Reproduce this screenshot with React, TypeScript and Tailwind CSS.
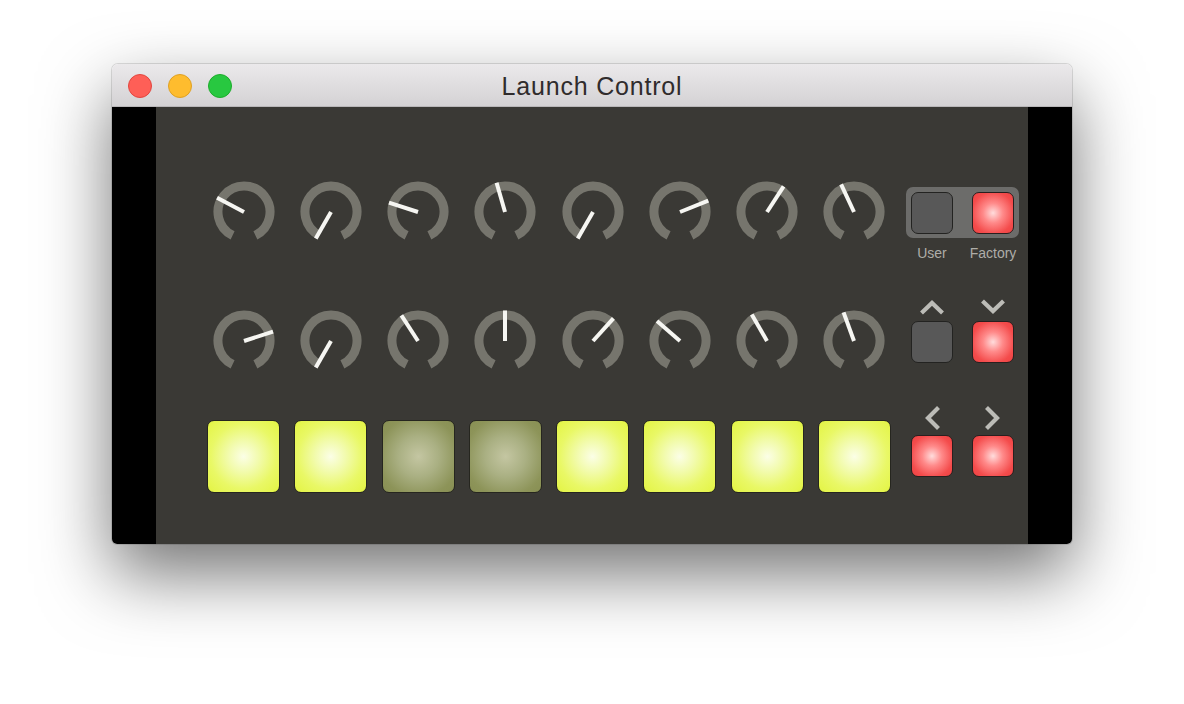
import React from "react";

const R1 = [-62, -150, -72, -16, -150, 68, 33, -25];
const R2 = [72, -150, -33, 0, 42, -49, -30, -20];
const PADS = [true, true, false, false, true, true, true, true];

function Knob({ angle }: { angle: number }) {
  const c = 31;
  const r = 26;
  const rad = (a: number) => (a * Math.PI) / 180;
  const pt = (a: number, rr: number) => [c + rr * Math.sin(rad(a)), c - rr * Math.cos(rad(a))];
  const [sx, sy] = pt(-154, r);
  const [ex, ey] = pt(154, r);
  const [px, py] = pt(angle, 30.5);
  return (
    <svg width="62" height="62" viewBox="0 0 62 62">
      <path
        d={`M ${sx} ${sy} A ${r} ${r} 0 1 1 ${ex} ${ey}`}
        fill="none"
        stroke="#76756d"
        strokeWidth="9"
      />
      <line x1={c} y1={c} x2={px} y2={py} stroke="#f6f6f2" strokeWidth="4" />
    </svg>
  );
}

function RedBtn() {
  return (
    <div className="w-[42px] h-[42px] rounded-[7px] border border-[#2a1f1f] bg-[radial-gradient(circle_at_center,#ffdcdc_0%,#ff8a8a_35%,#f44c4c_75%,#ee4242_100%)]" />
  );
}

function GrayBtn() {
  return <div className="w-[42px] h-[42px] rounded-[7px] border border-[#232321] bg-[#585858]" />;
}

function Pad({ on }: { on: boolean }) {
  return on ? (
    <div className="w-[73px] h-[73px] rounded-[7px] border border-[#26261f] bg-[radial-gradient(circle_at_center,#fbfee6_0%,#f2fbae_30%,#e9f866_65%,#e3f443_100%)]" />
  ) : (
    <div className="w-[73px] h-[73px] rounded-[7px] border border-[#26261f] bg-[radial-gradient(circle_at_center,#c4c6a2_0%,#aab083_40%,#8d9459_80%,#888f53_100%)]" />
  );
}

function Chevron({ dir }: { dir: "up" | "down" | "left" | "right" }) {
  const stroke = "#bcbcb7";
  const sw = "4.2";
  if (dir === "up")
    return (
      <svg width="24" height="16" viewBox="0 0 24 16">
        <polyline points="1.5,14 12,4 22.5,14" fill="none" stroke={stroke} strokeWidth={sw} />
      </svg>
    );
  if (dir === "down")
    return (
      <svg width="24" height="16" viewBox="0 0 24 16">
        <polyline points="1.5,2 12,12 22.5,2" fill="none" stroke={stroke} strokeWidth={sw} />
      </svg>
    );
  if (dir === "left")
    return (
      <svg width="16" height="24" viewBox="0 0 16 24">
        <polyline points="14.5,1.5 4,12 14.5,22.5" fill="none" stroke={stroke} strokeWidth={sw} />
      </svg>
    );
  return (
    <svg width="16" height="24" viewBox="0 0 16 24">
      <polyline points="1.5,1.5 12,12 1.5,22.5" fill="none" stroke={stroke} strokeWidth={sw} />
    </svg>
  );
}

export default function App() {
  return (
    <div className="w-[1184px] h-[704px] bg-white overflow-hidden pt-[64px] pl-[112px] font-['Liberation_Sans',Arial,sans-serif]">
      <div className="w-[960px] h-[480px] rounded-t-[6px] rounded-b-[5px] overflow-hidden flex flex-col shadow-[0_30px_70px_rgba(0,0,0,0.55),0_0_0_1px_rgba(0,0,0,0.12)]">
        {/* Title bar */}
        <div className="h-[43px] shrink-0 relative flex items-center justify-center border-b border-[#b9b7b9] bg-[linear-gradient(to_bottom,#ebe9eb,#d4d2d4)]">
          <div className="absolute left-[16px] top-[10px] flex gap-[16px]">
            <div className="w-[24px] h-[24px] rounded-full bg-[#fe5f57] border border-[#e2463f]" />
            <div className="w-[24px] h-[24px] rounded-full bg-[#febc2e] border border-[#dfa123]" />
            <div className="w-[24px] h-[24px] rounded-full bg-[#28c840] border border-[#1dad2b]" />
          </div>
          <span className="text-[25px] tracking-[0.8px] text-[#302c2c] leading-none mt-[2px]">Launch Control</span>
        </div>
        {/* Content */}
        <div className="flex flex-1">
          <div className="w-[44px] bg-black" />
          <div className="w-[872px] bg-[#3a3935] flex pl-[44px]">
            <div className="w-[698px] flex flex-col pt-[74px]">
              <div className="flex h-[62px]">
                {R1.map((a, i) => (
                  <div key={i} className="w-[87.25px] flex justify-center">
                    <Knob angle={a} />
                  </div>
                ))}
              </div>
              <div className="flex h-[62px] mt-[67px]">
                {R2.map((a, i) => (
                  <div key={i} className="w-[87.25px] flex justify-center">
                    <Knob angle={a} />
                  </div>
                ))}
              </div>
              <div className="flex h-[73px] mt-[48px]">
                {PADS.map((on, i) => (
                  <div key={i} className="w-[87.25px] flex justify-center">
                    <Pad on={on} />
                  </div>
                ))}
              </div>
            </div>
            <div className="w-[130px] flex flex-col pt-[80px] pl-[8px]">
              <div className="w-[113px] h-[51px] rounded-[7px] bg-[#6c6c6a] flex items-center px-[5px] gap-[19px]">
                <GrayBtn />
                <RedBtn />
              </div>
              <div className="flex pl-[5px] gap-[19px] mt-[7px] h-[16px] text-[14px] leading-[16px] text-[#aeada8]">
                <div className="w-[42px] flex justify-center whitespace-nowrap">User</div>
                <div className="w-[42px] flex justify-center whitespace-nowrap">Factory</div>
              </div>
              <div className="flex pl-[5px] gap-[19px] mt-[38px] h-[16px]">
                <div className="w-[42px] flex justify-center"><Chevron dir="up" /></div>
                <div className="w-[42px] flex justify-center"><Chevron dir="down" /></div>
              </div>
              <div className="flex pl-[5px] gap-[19px] mt-[6px]">
                <GrayBtn />
                <RedBtn />
              </div>
              <div className="flex pl-[5px] gap-[19px] mt-[43px] h-[24px]">
                <div className="w-[42px] flex justify-center"><Chevron dir="left" /></div>
                <div className="w-[42px] flex justify-center"><Chevron dir="right" /></div>
              </div>
              <div className="flex pl-[5px] gap-[19px] mt-[5px]">
                <RedBtn />
                <RedBtn />
              </div>
            </div>
          </div>
          <div className="w-[44px] bg-black" />
        </div>
      </div>
    </div>
  );
}
